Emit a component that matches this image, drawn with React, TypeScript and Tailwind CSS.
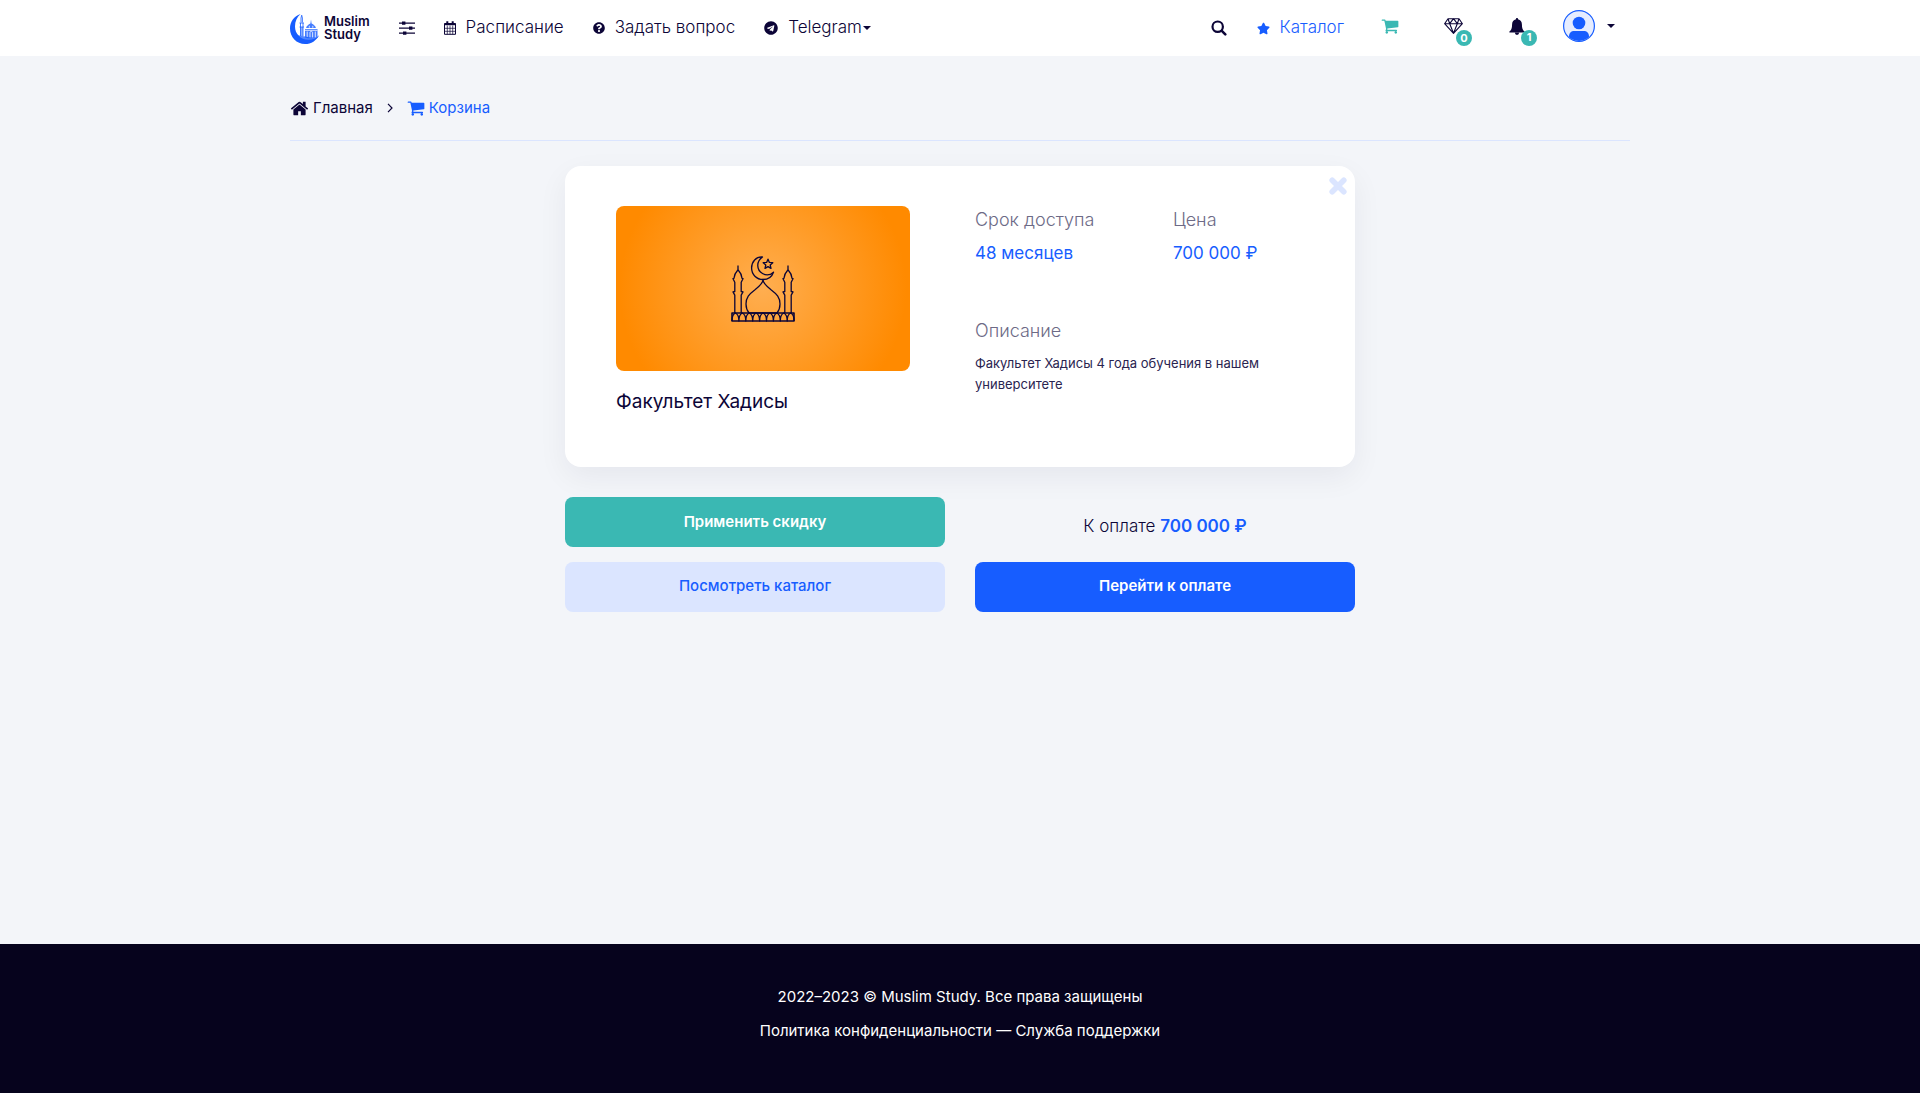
import type { ReactNode } from "react";
import { FaQuestionCircle, FaStar, FaTelegram } from "react-icons/fa";

function Caret() {
  return (
    <svg width="8" height="4" viewBox="0 0 8 4" fill="currentColor" aria-hidden="true">
      <path d="M0 0h8L4 4z" />
    </svg>
  );
}

function LogoMark() {
  return (
    <svg width="30" height="31" viewBox="0 0 30 31" className="text-[#175dff]" aria-hidden="true">
      <path
        fill="currentColor"
        d="M10.500 1C4 3.200 0 9 0 15.400 0 24 6.600 31 15 31c6.200 0 11.600-3.500 14-8.800-3 3.200-6.600 4.700-10.700 4.600C10.500 26.600 5 20.800 5 13.500 5 8.500 7 4 10.500 1z"
      />
      <path fill="none" stroke="currentColor" strokeWidth=".8" d="M11 9.500V5l.7-2.800.7 2.800v4.500M10.500 10v13M13 10v13M9.500 10h4.500M9.500 14h4.500" />
      <path fill="currentColor" opacity=".5" d="M10.500 14h2.500v9h-2.500z" />
      <path fill="currentColor" d="M21 6.500l.6 4c2 1 4 2.500 4.300 4.500h-9.800c.3-2 2.300-3.500 4.300-4.500z" opacity=".8" />
      <path fill="currentColor" d="M15 16h12.500v7.500c-3 2-8 2.500-12.500 1z" opacity=".8" />
      <path stroke="#fff" strokeWidth=".8" fill="none" d="M17.200 24v-5.500M20 24.500v-4.700c0-2 2.600-2 2.600 0v4.700M25.300 24v-5.500M15 17.300h12.500M19.300 14.800v-2M22.800 14.800v-2" />
      <path fill="currentColor" d="M7 22c5 1 9 1.300 13 2.500 3 .6 6 .3 8.500-1-2.600 3-6 4-9.500 4-5 0-9.500-2-12-5.500z" opacity=".75" />
    </svg>
  );
}

function SlidersIcon() {
  return (
    <svg width="16" height="14" viewBox="0 0 16 14" aria-hidden="true">
      <path stroke="currentColor" strokeWidth="1.200" d="M0 2.200h16M0 7.200h16M0 12.200h16" />
      <path fill="currentColor" d="M3 .6h3.400V3.800H3zM10 5.600h3.400V8.800H10zM4 10.600h3.400V13.800H4z" />
    </svg>
  );
}

function CalendarIcon() {
  return (
    <svg width="12" height="14" viewBox="0 0 12 14" fill="none" stroke="currentColor" aria-hidden="true">
      <path strokeWidth="1" d="M.5 2.500h11v10.800H.5z" />
      <path strokeWidth="1.600" d="M.5 3.400h11" />
      <path strokeWidth="2" d="M3.300.3v3M8.700.3v3" />
      <path strokeWidth=".7" d="M.5 7.300h11M.5 10.300h11M3.300 4.500v8.800M6 4.500v8.800M8.700 4.500v8.800" />
    </svg>
  );
}

function SearchIcon() {
  return (
    <svg width="16" height="16" viewBox="0 0 16 16" fill="none" stroke="currentColor" strokeLinecap="round" aria-hidden="true">
      <circle cx="6.700" cy="6.700" r="5.200" strokeWidth="2.200" />
      <path strokeWidth="2.600" d="M10.800 10.800l3.500 3.500" />
    </svg>
  );
}

function CartIcon() {
  return (
    <svg width="18" height="18" viewBox="0 0 1792 1792" fill="currentColor" aria-hidden="true">
      <path d="M704 1536q0 52-38 90t-90 38-90-38-38-90 38-90 90-38 90 38 38 90zm896 0q0 52-38 90t-90 38-90-38-38-90 38-90 90-38 90 38 38 90zm128-1088v512q0 24-16.500 42.500t-40.500 21.500l-1044 122q13 60 13 70 0 16-24 64h920q26 0 45 19t19 45-19 45-45 19h-1024q-26 0-45-19t-19-45q0-11 8-31.500t16-36 21.500-40 15.500-29.500l-177-823h-204q-26 0-45-19t-19-45 19-45 45-19h256q16 0 28.500 6.500t19.500 15.500 13 24.500 8 26 5.500 29.500 4.500 26h1201q26 0 45 19t19 45z" />
    </svg>
  );
}

function HomeIcon() {
  return (
    <svg width="19" height="19" viewBox="0 0 1792 1792" fill="currentColor" aria-hidden="true">
      <path d="M1472 992v480q0 26-19 45t-45 19h-384v-384h-256v384h-384q-26 0-45-19t-19-45v-480q0-1 .5-3t.5-3l575-474 575 474q1 2 1 6zm223-69l-62 74q-8 9-21 11h-3q-13 0-21-7l-692-577-692 577q-12 8-24 7-13-2-21-11l-62-74q-8-10-7-23.500t11-21.500l719-599q32-26 76-26t76 26l244 204v-195q0-14 9-23t23-9h192q14 0 23 9t9 23v408l219 182q10 8 11 21.500t-7 23.500z" />
    </svg>
  );
}

function GemIcon() {
  return (
    <svg width="19" height="16" viewBox="0 0 19 16" fill="none" stroke="currentColor" strokeWidth="1.100" strokeLinejoin="round" aria-hidden="true">
      <path d="M4 .7h11l3.400 5L9.500 15.300.6 5.700zM.6 5.700h17.800M9.500 15.300L5.700 5.700 9.500.7l3.800 5zM4 .7l1.700 5M15 .7l-1.700 5" />
    </svg>
  );
}

function BellIcon() {
  return (
    <svg width="16" height="17" viewBox="0 0 16 17" fill="currentColor" aria-hidden="true">
      <path d="M8 0c.7 0 1.100.5 1 1.200 2.500.5 3.900 2.500 3.900 5 0 4 .9 6 2.700 7.400v.8H.4v-.8C2.200 12.200 3.100 10.200 3.100 6.200c0-2.500 1.400-4.500 3.900-5C6.900.5 7.300 0 8 0zM5.900 14.800h4.200a2.100 2.100 0 0 1-4.200 0z" />
    </svg>
  );
}

function AvatarIcon() {
  return (
    <svg width="32" height="32" viewBox="0 0 32 32" aria-hidden="true">
      <clipPath id="avatar-clip">
        <circle cx="16" cy="16" r="15" />
      </clipPath>
      <circle cx="16" cy="16" r="15.400" fill="#e6edff" stroke="#175dff" strokeWidth="1.200" />
      <circle cx="16" cy="13" r="6.300" fill="#175dff" />
      <path clipPath="url(#avatar-clip)" fill="#175dff" d="M6 32v-5.500c0-3.500 2-5.500 5.500-5.500h9c3.500 0 5.500 2 5.500 5.500V32z" />
    </svg>
  );
}

function MosqueIcon() {
  return (
    <svg width="64" height="66" viewBox="0 0 64 66" fill="none" stroke="#0c0537" strokeWidth="1.300" strokeLinejoin="round" aria-hidden="true">
      <path d="M31.500 1C25 .5 20.600 6 20.600 12c0 6.500 5 11.500 11.400 11.500 5 0 9-3 10.500-7.300-3 2.800-7.500 3.300-11 1.300-6-3.500-6.600-12-0-16.500z" />
      <path d="M37 3.200l1.400 3.200 3.400.3-2.600 2.300.8 3.400-3-1.800-3 1.800.8-3.400-2.600-2.300 3.400-.3z" />
      <path d="M32 23.500c0 4-4 7-8 10.200-6 4.500-9 8-9 14.300 0 3.300 1 6.500 3 9h28c2-2.500 3-5.700 3-9 0-6.300-3-9.800-9-14.300-4-3.200-8-6.200-8-10.200z" />
      <path id="minaret" d="M7 9.500v4.300c-2 2.200-3.700 5-4 8.500l-1 .4 1.800 3.500v9.300l-1.800.4 1.800 3.200V57M7 13.800c2 2.200 3.700 5 4 8.500l1 .4-1.800 3.500v9.300l1.800.4-1.800 3.200V57" />
      <use href="#minaret" x="50" />
      <path strokeWidth="1.600" d="M1 57h62v8H1z" />
      <path d="M1 65c0-4 1.300-7 3.400-8 2.200 1 3.500 4 3.500 8 0-4 1.300-7 3.400-8 2.200 1 3.500 4 3.500 8 0-4 1.300-7 3.400-8 2.200 1 3.500 4 3.500 8 0-4 1.300-7 3.400-8 2.200 1 3.500 4 3.500 8 0-4 1.300-7 3.400-8 2.200 1 3.500 4 3.500 8 0-4 1.300-7 3.400-8 2.200 1 3.500 4 3.500 8 0-4 1.300-7 3.400-8 2.200 1 3.500 4 3.500 8 0-4 1.300-7 3.400-8 2.200 1 3.500 4 3.500 8 0-4 1.300-7 3.400-8 2.200 1 3.500 4 3.500 8" />
    </svg>
  );
}

function NavLink({ icon, children }: { icon: ReactNode; children: ReactNode }) {
  return (
    <a href="#" className="flex items-center gap-2.5 whitespace-nowrap">
      {icon}
      <span>{children}</span>
    </a>
  );
}

function CounterLink({ label, count, children }: { label: string; count: number; children: ReactNode }) {
  return (
    <a href="#" aria-label={label} className="relative block pb-1">
      {children}
      <span className="absolute top-3 left-3 flex size-4 items-center justify-center rounded-full bg-[#3ab8b3] text-[11px] font-bold text-white">
        {count}
      </span>
    </a>
  );
}

function Header() {
  return (
    <header className="bg-white">
      <div className="mx-auto flex h-14 max-w-[1340px] items-center justify-between text-[17px] font-light">
        <nav className="flex items-center gap-[29px]">
          <a href="#" className="flex items-center gap-1 text-[13px] font-semibold">
            <LogoMark />
            <span className="flex flex-col leading-[13px]">
              <span>Muslim</span>
              <span>Study</span>
            </span>
          </a>
          <button type="button" aria-label="Меню">
            <SlidersIcon />
          </button>
          <NavLink icon={<CalendarIcon />}>Расписание</NavLink>
          <NavLink icon={<FaQuestionCircle size={12} />}>Задать вопрос</NavLink>
          <button type="button" className="flex items-center gap-2.5">
            <FaTelegram size={14} />
            <span className="flex items-center gap-px">
              Telegram
              <Caret />
            </span>
          </button>
        </nav>
        <div className="flex items-center pr-[15px]">
          <button type="button" aria-label="Поиск" className="mr-[30px]">
            <SearchIcon />
          </button>
          <div className="mr-[37px] text-[#175dff]">
            <NavLink icon={<FaStar size={13} />}>Каталог</NavLink>
          </div>
          <a href="#" aria-label="Корзина" className="mr-[45px] pb-1 text-[#3ab8b3]">
            <CartIcon />
          </a>
          <div className="mr-[46px]">
            <CounterLink label="Баллы" count={0}>
              <GemIcon />
            </CounterLink>
          </div>
          <div className="mr-[38px]">
            <CounterLink label="Уведомления" count={1}>
              <BellIcon />
            </CounterLink>
          </div>
          <button type="button" aria-label="Профиль" className="flex items-center gap-3 pb-1">
            <AvatarIcon />
            <Caret />
          </button>
        </div>
      </div>
    </header>
  );
}

function Breadcrumbs() {
  return (
    <nav aria-label="Навигация" className="flex h-[85px] items-center border-b border-[#dbe5ff] pt-5 text-[15px]">
      <a href="#" className="flex items-center gap-1">
        <HomeIcon />
        Главная
      </a>
      <svg width="6" height="10" viewBox="0 0 6 10" fill="none" stroke="currentColor" className="mx-3.5" aria-hidden="true">
        <path d="M1 .8L5 5 1 9.200" strokeWidth="1.200" />
      </svg>
      <a href="#" className="flex items-center gap-1 text-[#175dff]">
        <CartIcon />
        Корзина
      </a>
    </nav>
  );
}

function CartItem() {
  return (
    <article className="relative grid grid-cols-2 gap-x-[30px] rounded-2xl bg-white pt-10 pb-[51px] shadow-[0_10px_30px_rgba(12,5,55,0.06)]">
      <div className="pr-[35px] pl-[51px]">
        <div className="flex h-[165px] items-center justify-center rounded-lg bg-[radial-gradient(circle,#ffae50_0%,#ff8a00_85%)]">
          <MosqueIcon />
        </div>
        <h2 className="mt-[17px] text-[19px] leading-7">Факультет Хадисы</h2>
      </div>
      <dl className="grid grid-cols-2 content-start gap-x-4 text-[17px] leading-7">
        <div>
          <dt className="text-[18px] font-light text-[#6d6a86]">Срок доступа</dt>
          <dd className="mt-[5px] text-[#175dff]">48 месяцев</dd>
        </div>
        <div>
          <dt className="text-[18px] font-light text-[#6d6a86]">Цена</dt>
          <dd className="mt-[5px] text-[#175dff]">700 000 ₽</dd>
        </div>
        <div className="col-span-2 mt-[50px] pr-16">
          <dt className="text-[18px] font-light text-[#6d6a86]">Описание</dt>
          <dd className="mt-2 text-[13px] leading-[21px] text-[#2a2450]">
            Факультет Хадисы 4 года обучения в нашем университете
          </dd>
        </div>
      </dl>
      <button type="button" aria-label="Удалить" className="absolute top-[11px] right-2 text-[#dbe5ff]">
        <svg width="18" height="18" viewBox="0 0 18 18" fill="none" stroke="currentColor" strokeWidth="5.600" strokeLinecap="round" aria-hidden="true">
          <path d="M3.200 3.200l11.600 11.600M14.800 3.200L3.200 14.800" />
        </svg>
      </button>
    </article>
  );
}

export default function App() {
  return (
    <div className="flex min-h-screen flex-col bg-[#f3f5f9] font-[Inter,sans-serif] text-[#0c0537]">
      <Header />
      <div className="mx-auto w-full max-w-[1340px] grow">
        <Breadcrumbs />
        <main className="mx-auto mt-[25px] max-w-[790px]">
          <CartItem />
          <div className="mt-[30px] grid grid-cols-2 gap-x-[30px] gap-y-[15px] text-[15px]">
            <button type="button" className="h-[50px] rounded-lg bg-[#3ab8b3] font-semibold text-white">
              Применить скидку
            </button>
            <p className="pt-[15px] text-center text-[17px] leading-7 font-light">
              К оплате <strong className="font-semibold text-[#175dff]">700 000 ₽</strong>
            </p>
            <button type="button" className="h-[50px] rounded-lg bg-[#dbe5ff] pb-0.5 font-medium text-[#175dff]">
              Посмотреть каталог
            </button>
            <button type="button" className="h-[50px] rounded-lg bg-[#175dff] pb-0.5 font-semibold text-white">
              Перейти к оплате
            </button>
          </div>
        </main>
      </div>
      <footer className="bg-[#06031d] pt-9 pb-[45px] text-center text-[15px] leading-[34px] text-white">
        <p>2022–2023 © Muslim Study. Все права защищены</p>
        <p>
          <a href="#">Политика конфиденциальности</a> — <a href="#">Служба поддержки</a>
        </p>
      </footer>
    </div>
  );
}
